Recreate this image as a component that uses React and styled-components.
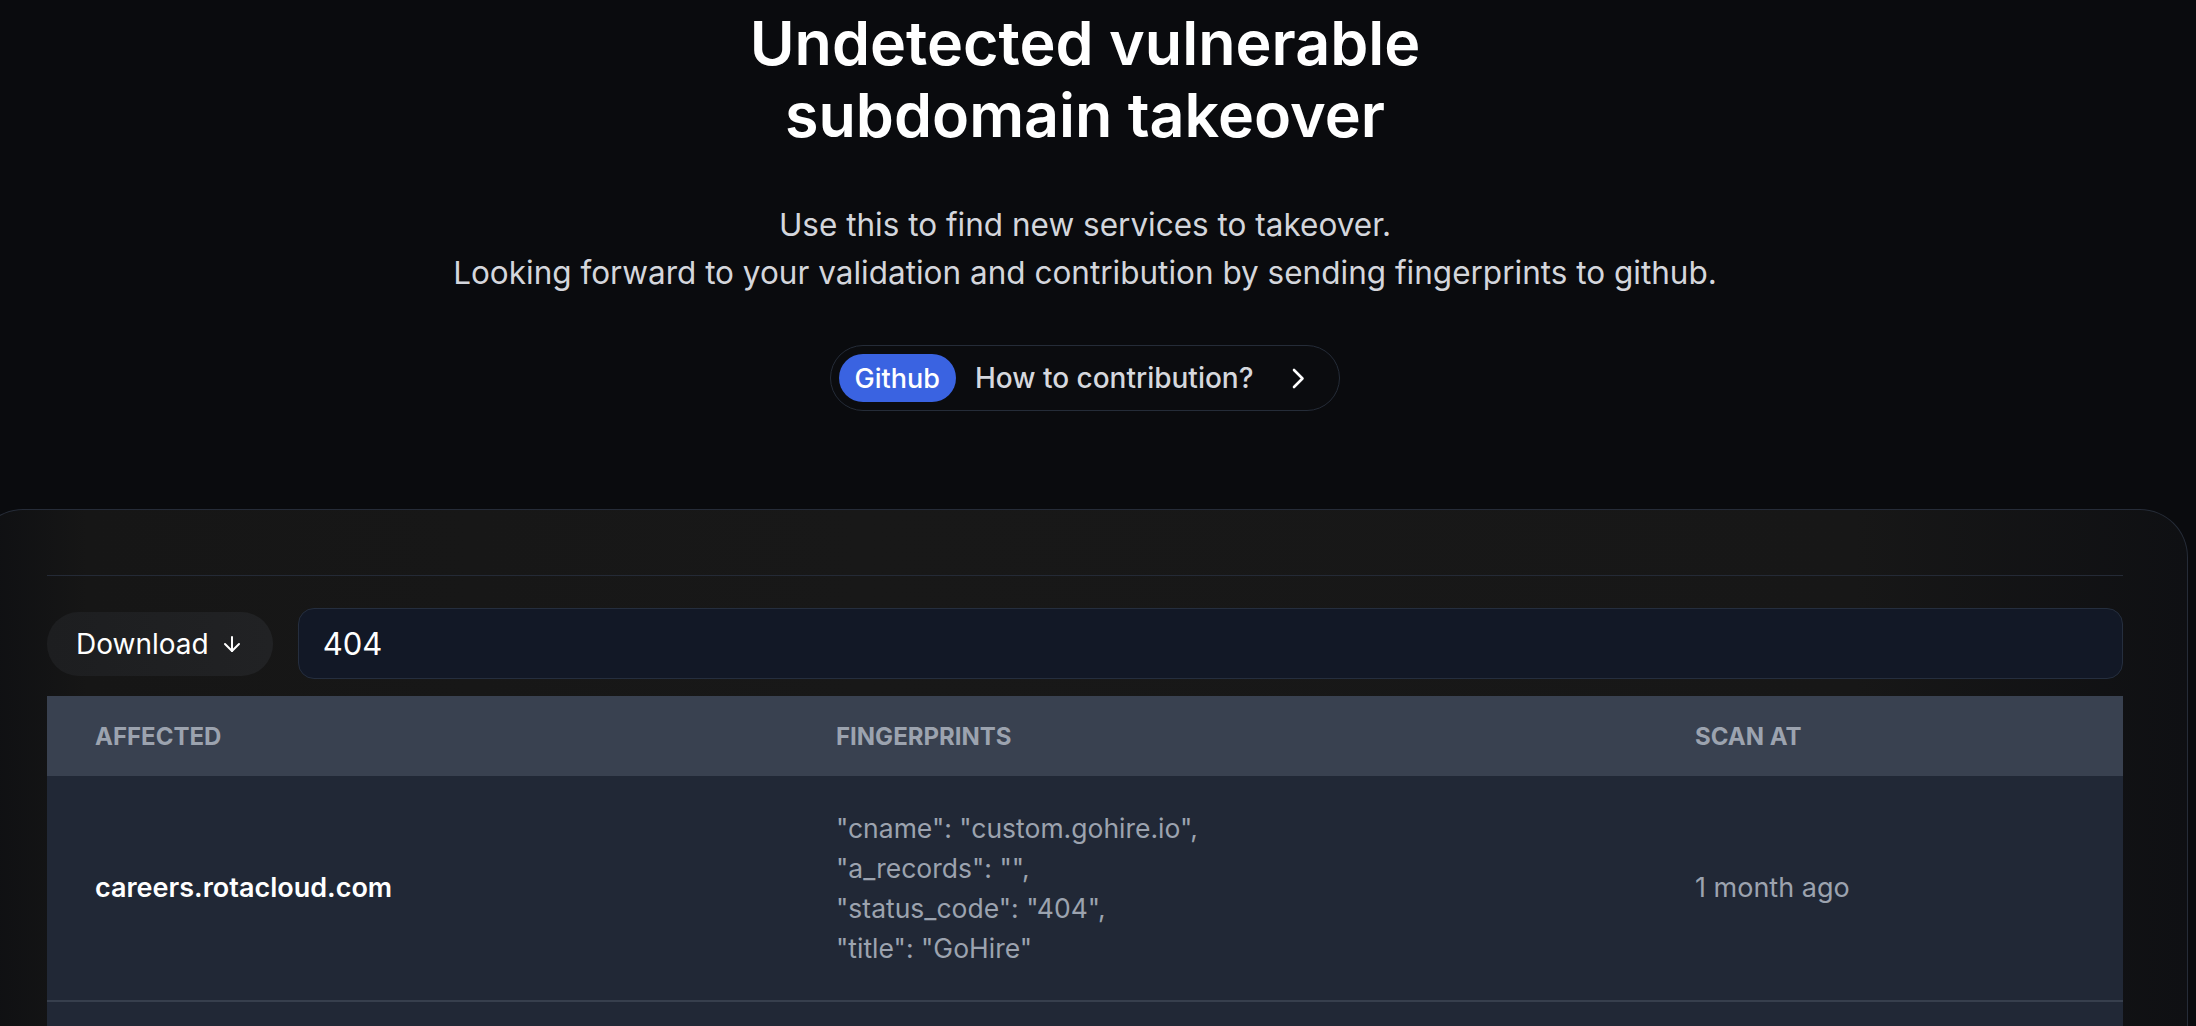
import React from 'react';
import styled, { createGlobalStyle } from 'styled-components';
import { ArrowDown } from 'lucide-react';

const GlobalStyle = createGlobalStyle`
  html, body {
    margin: 0;
    padding: 0;
    background: #0a0b0e;
    overflow: hidden;
  }
  body {
    font-family: Inter, "Noto Sans", sans-serif;
    color: #fff;
  }
  * {
    box-sizing: border-box;
  }
`;

// content column is centred a little left of the window, like the original
const Page = styled.main`
  display: flex;
  flex-direction: column;
  align-items: center;
  padding: 7px 26px 0 0;
  min-height: 100vh;
`;

const Title = styled.h1`
  margin: 0;
  font-size: 61px;
  line-height: 72px;
  font-weight: 600;
  text-align: center;
  color: #fff;
`;

const Subtitle = styled.p`
  margin: 50px 0 0;
  font-size: 31.5px;
  line-height: 48px;
  text-align: center;
  color: #d4d6dc;
`;

const Pill = styled.a`
  margin-top: 48px;
  display: flex;
  align-items: center;
  height: 66px;
  padding: 0 34px 0 8px;
  border: 1px solid #252c38;
  border-radius: 999px;
  background: #0b0c0f;
  text-decoration: none;
  cursor: pointer;
`;

const Badge = styled.span`
  display: flex;
  align-items: center;
  height: 48px;
  padding: 0 16px;
  border-radius: 999px;
  background: #3a63e1;
  color: #fff;
  font-size: 27px;
  font-weight: 500;
`;

const PillText = styled.span`
  margin-left: 19px;
  font-size: 28px;
  font-weight: 500;
  color: #d6d8de;
`;

const Chevron = styled.svg`
  margin-left: 39px;
  width: 13px;
  height: 21px;
`;

const Card = styled.section`
  align-self: stretch;
  margin: 98px -18px 0 -25px;
  padding: 65px 64px 0 71px;
  border: 1px solid #262c38;
  border-bottom: none;
  border-radius: 48px 48px 0 0;
  background: linear-gradient(90deg, #0e0f12 0%, #161616 5%, #181818 40%, #171717 85%, #0f1013 100%);
  flex: 1;
`;

const Divider = styled.hr`
  margin: 0;
  border: none;
  height: 1px;
  background: #242a36;
`;

const Controls = styled.div`
  display: flex;
  align-items: center;
  gap: 25px;
  margin-top: 32px;
`;

const DownloadButton = styled.button`
  display: flex;
  align-items: center;
  gap: 16px;
  height: 64px;
  padding: 0 34px 0 29px;
  border: none;
  border-radius: 999px;
  background: linear-gradient(90deg, #1d1e20, #212224);
  color: #fff;
  font-family: inherit;
  font-size: 28px;
  font-weight: 400;
  cursor: pointer;

  svg {
    margin-left: -5px;
    margin-right: -5px;
  }
`;

const SearchInput = styled.input`
  flex: 1;
  height: 71px;
  padding: 0 24px;
  border: 1px solid #252e3e;
  border-radius: 16px;
  background: #121826;
  color: #fff;
  font-family: inherit;
  font-size: 31px;
  outline: none;
`;

const Table = styled.table`
  width: 100%;
  margin-top: 17px;
  border-collapse: collapse;
  table-layout: fixed;
`;

const HeadRow = styled.tr`
  height: 80px;
  background: #394150;
`;

const Th = styled.th`
  width: ${({ $w }) => $w || 'auto'};
  padding: 0 48px;
  text-align: left;
  font-size: 24px;
  font-weight: 650;
  text-transform: uppercase;
  color: #9ca3af;
`;

const Row = styled.tr`
  background: #212836;
  border-bottom: 2px solid #373f4d;
`;

const Td = styled.td`
  padding: 32px 48px;
  vertical-align: middle;
  font-size: ${({ $size }) => $size || '27px'};
  line-height: 40px;
  font-weight: ${({ $strong }) => ($strong ? 600 : 400)};
  color: ${({ $strong }) => ($strong ? '#fff' : '#9ca3af')};
`;

const Line = styled.div`
  white-space: nowrap;
`;

const results = [
  {
    host: 'careers.rotacloud.com',
    fingerprint: ['"cname": "custom.gohire.io",', '"a_records": "",', '"status_code": "404",', '"title": "GoHire"'],
    scanned: '1 month ago',
  },
  {
    host: 'jobs.rotacloud.com',
    fingerprint: ['"cname": "custom.gohire.io",', '"a_records": "",', '"status_code": "404",', '"title": "GoHire"'],
    scanned: '1 month ago',
  },
];

export default function App() {
  return (
    <>
      <GlobalStyle />
      <Page>
        <Title>
          Undetected vulnerable
          <br />
          subdomain takeover
        </Title>
        <Subtitle>
          Use this to find new services to takeover.
          <br />
          Looking forward to your validation and contribution by sending fingerprints to github.
        </Subtitle>
        <Pill>
          <Badge>Github</Badge>
          <PillText>How to contribution?</PillText>
          <Chevron viewBox="0 0 13 21" fill="none">
            <polyline points="2,2 10.5,10.5 2,19" stroke="#fff" strokeWidth="2.6" strokeLinecap="round" strokeLinejoin="round" />
          </Chevron>
        </Pill>
        <Card>
          <Divider />
          <Controls>
            <DownloadButton>
              Download
              <ArrowDown size={24} strokeWidth={2} />
            </DownloadButton>
            <SearchInput defaultValue="404" />
          </Controls>
          <Table>
            <thead>
              <HeadRow>
                <Th $w="741px">Affected</Th>
                <Th $w="859px">Fingerprints</Th>
                <Th>Scan at</Th>
              </HeadRow>
            </thead>
            <tbody>
              {results.map((r) => (
                <Row key={r.host}>
                  <Td $strong>{r.host}</Td>
                  <Td $size="26.5px">
                    {r.fingerprint.map((l) => (
                      <Line key={l}>{l}</Line>
                    ))}
                  </Td>
                  <Td>{r.scanned}</Td>
                </Row>
              ))}
            </tbody>
          </Table>
        </Card>
      </Page>
    </>
  );
}
